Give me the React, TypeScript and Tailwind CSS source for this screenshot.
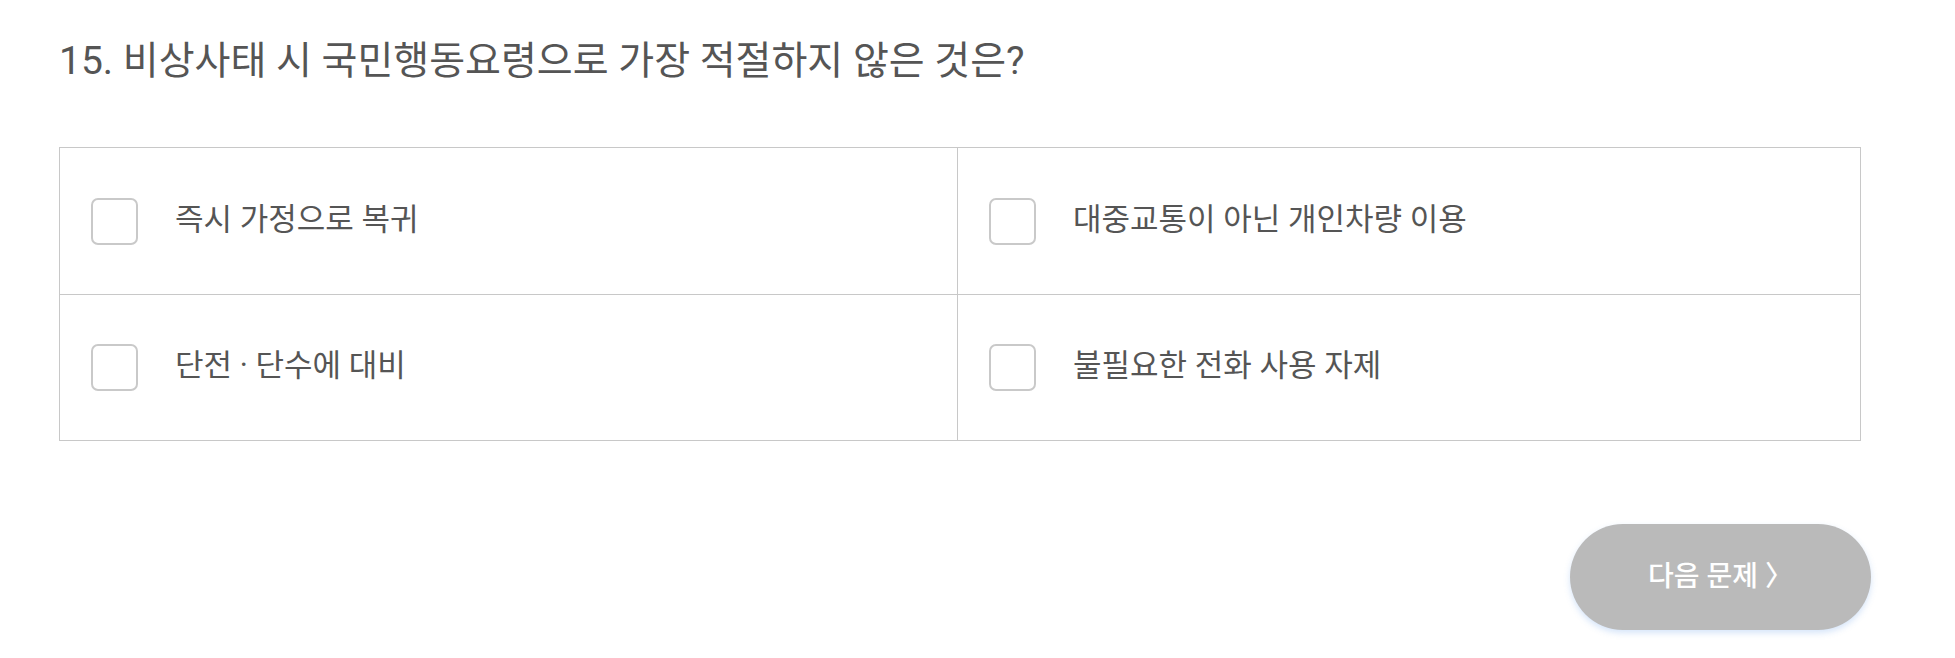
const options = [
  '즉시 가정으로 복귀',
  '대중교통이 아닌 개인차량 이용',
  '단전 · 단수에 대비',
  '불필요한 전화 사용 자제'
];

function OptionCell({ label, index }: { label: string; index: number }) {
  const isRight = index % 2 === 1;
  const isBottom = index >= 2;

  return (
    <label
      className={
        'flex h-[146px] cursor-pointer items-center pl-[31px] ' +
        (isRight ? 'border-l border-[#c8c8c8] ' : '') +
        (isBottom ? 'border-t border-[#c8c8c8]' : '')
      }
    >
      <span className="h-[47px] w-[47px] shrink-0 rounded-[7px] border-2 border-[#c9c9c9] bg-white" />
      <span className="ml-[37px] pb-[4px] text-[31px] leading-none text-[#555555]">{label}</span>
    </label>
  );
}

export default function App() {
  return (
    <div
      className="h-[658px] w-[1955px] bg-white pl-[59px] pt-[42px]"
      style={{ fontFamily: 'Roboto, "Noto Sans CJK KR", sans-serif' }}
    >
      <h2 className="text-[39px] leading-none font-normal text-[#555555]">
        15. 비상사태 시 국민행동요령으로 가장 적절하지 않은 것은?
      </h2>
      <div className="mt-[66px] grid w-[1802px] grid-cols-[897px_1fr] border border-[#c8c8c8]">
        {options.map((option, index) => (
          <OptionCell key={option} label={option} index={index} />
        ))}
      </div>
      <div className="mt-[83px] flex w-[1812px] justify-end">
        <button
          type="button"
          className="flex h-[106px] w-[301px] items-center justify-center rounded-full bg-[#bababa] text-[28px] font-medium text-white shadow-[0_3px_6px_rgba(90,150,230,0.25)]"
        >
          다음 문제 〉
        </button>
      </div>
    </div>
  );
}
